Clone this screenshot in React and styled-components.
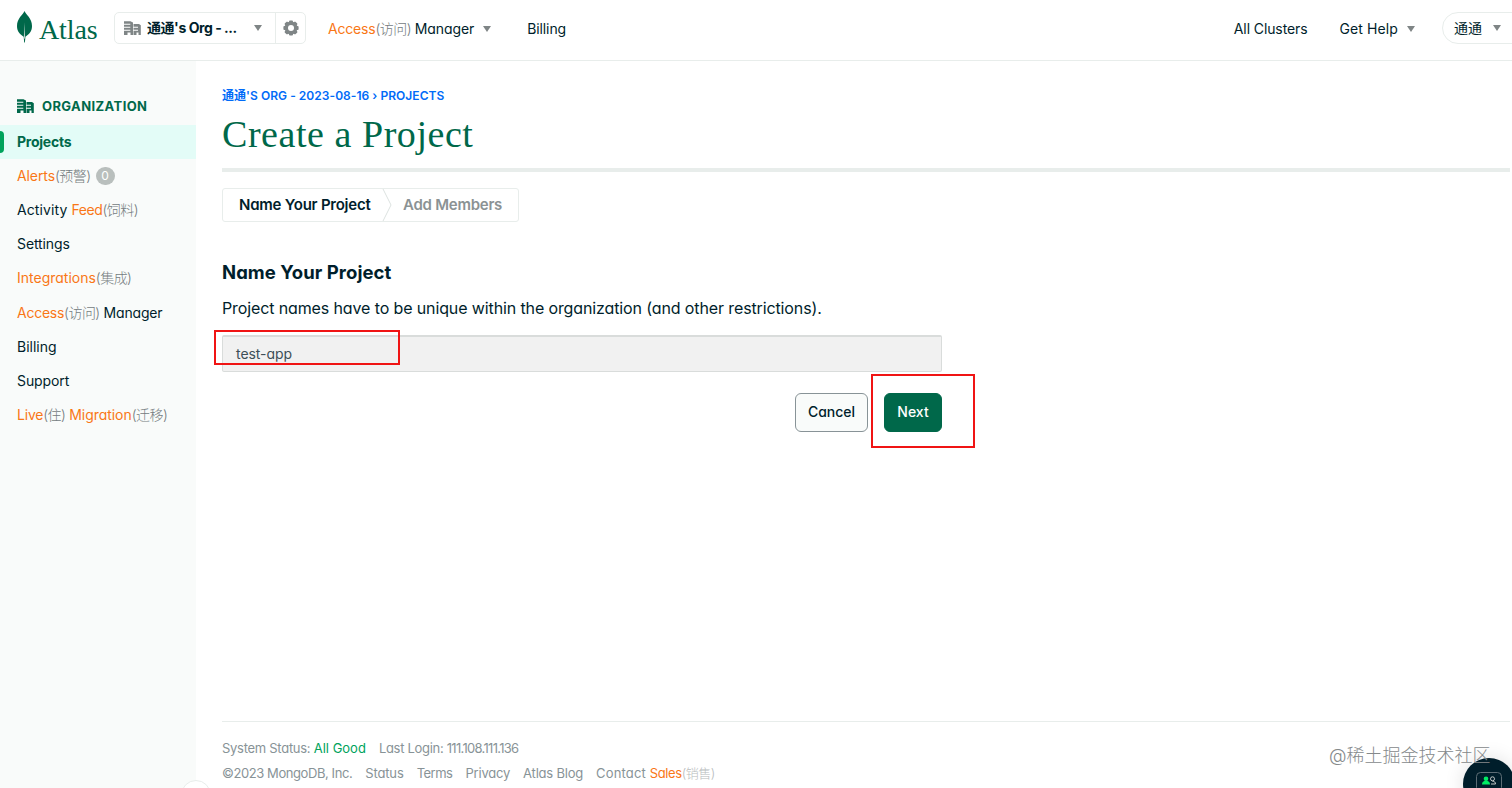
import React from 'react'
import styled, { createGlobalStyle } from 'styled-components'

const GlobalStyle = createGlobalStyle`
* {
box-sizing: border-box;
}
body {
margin: 0;
overflow: hidden;
background-color: #fff;
color: #001e2b;
font-family: Inter, "Noto Sans CJK SC", sans-serif;
font-feature-settings: "cv11";
font-size: 14px;
line-height: 20px;
}
`
const Page = styled.div`
height: 788px;
display: flex;
flex-direction: column;
overflow: hidden;
position: relative;
`
const Text = styled.span`
letter-spacing: ${(props) => props.$ls || 0}px;
white-space: pre;
`
const Word = styled(Text)`
color: #f97716;
`
const Hint = styled(Text)`
color: ${(props) => props.$light ? '#b8bcbd' : '#747b7e'};
font-weight: 300;
letter-spacing: -0.55px;
`

// header
const Header = styled.header`
height: 61px;
flex-shrink: 0;
display: flex;
align-items: flex-start;
padding: 12px 0 0 16px;
border-bottom: 1px solid #e8edeb;
`
const Logo = styled.div`
width: 98px;
height: 34px;
display: flex;
align-items: flex-start;
gap: 6px;
color: #00684a;
`
const LogoText = styled.span`
font-family: "Liberation Serif", serif;
font-size: 28px;
line-height: 36px;
letter-spacing: ${(props) => props.$ls}px;
`
const OrgPicker = styled.div`
width: 192px;
height: 32px;
display: flex;
border: 1px solid #e8edeb;
border-radius: 5px;
`
const OrgName = styled.div`
width: 161px;
display: flex;
align-items: center;
padding-left: 9px;
border-right: 1px solid #e8edeb;
font-weight: 700;
`
const OrgLabel = styled.span`
width: 113px;
padding-left: 6px;
`
const Gear = styled.div`
flex: 1;
display: flex;
align-items: center;
justify-content: center;
`
const NavItem = styled.div`
height: 33px;
display: flex;
align-items: center;
margin-left: ${(props) => props.$left}px;
`
const Spacer = styled.div`
flex: 1;
`
const Caret = styled.i`
border: 4.5px solid transparent;
border-top: 6px solid #7f8586;
border-bottom: 0;
margin-left: ${(props) => props.$left || 0}px;
`
const UserPill = styled.div`
width: 90px;
height: 32px;
margin-left: 27px;
margin-right: -20px;
padding-left: 11px;
display: flex;
align-items: center;
border: 1px solid #e8edeb;
border-radius: 16px;
`

// sidebar
const Body = styled.div`
flex: 1;
display: flex;
min-height: 0;
`
const Sidebar = styled.nav`
width: 196px;
flex-shrink: 0;
padding-top: 26px;
background-color: #f9fbfa;
position: relative;
`
const SideTitle = styled.div`
height: 38px;
display: flex;
align-items: center;
gap: 8px;
padding-left: 17px;
font-size: 13px;
font-weight: 700;
color: #00684a;
`
const SideItem = styled.div`
height: 34.2px;
display: flex;
align-items: center;
padding: 0 0 1px 17px;
position: relative;
color: ${(props) => props.$active ? '#00684a' : '#001e2b'};
font-weight: ${(props) => props.$active ? 700 : 400};
background-color: ${(props) => props.$active ? '#e3fcf7' : 'transparent'};
&::before {
content: '';
display: ${(props) => props.$active ? 'block' : 'none'};
position: absolute;
left: 0;
top: 6px;
width: 4px;
height: 22px;
border-radius: 0 6px 6px 0;
background-color: #00a35c;
}
`
const Badge = styled.span`
width: 19px;
height: 18px;
margin-left: 5px;
border-radius: 9px;
background-color: #b9bfbd;
color: #fff;
font-size: 12px;
line-height: 18px;
text-align: center;
`
const Collapse = styled.div`
position: absolute;
left: 181px;
top: 719px;
width: 30px;
height: 30px;
border-radius: 50%;
border: 1px solid #e8edeb;
background-color: #fff;
`

// main
const Main = styled.main`
flex: 1;
display: flex;
flex-direction: column;
padding: 26px 2px 0 26px;
`
const Crumb = styled.div`
height: 18px;
line-height: 18px;
font-size: 12px;
font-weight: 600;
color: #016bf8;
`
const Title = styled.h1`
height: 63px;
margin: 0;
padding-top: 7px;
font-family: "Liberation Serif", serif;
font-size: 38px;
font-weight: 400;
line-height: 44px;
color: #00684a;
`
const Rule = styled.div`
height: 4px;
flex-shrink: 0;
background-color: #e8edeb;
`
const Steps = styled.div`
width: 297px;
height: 34px;
margin-top: 16px;
display: flex;
align-items: center;
border: 1px solid #e8edeb;
border-radius: 3px;
font-size: 15px;
font-weight: 600;
`
const Step = styled.div`
width: ${(props) => props.$width}px;
padding-left: ${(props) => props.$pad}px;
color: ${(props) => props.$muted ? '#8b9294' : '#001e2b'};
`
const Heading = styled.h2`
margin: 37px 0 0;
height: 27px;
line-height: 26px;
font-size: 18.5px;
font-weight: 700;
`
const Lead = styled.p`
margin: 10px 0 0;
height: 24px;
line-height: 24px;
font-size: 16px;
`
const Form = styled.div`
width: 720px;
margin-top: 15px;
position: relative;
`
const Field = styled.div`
height: 37px;
padding: 0 0 0 13px;
border: 1px solid #d9dcdb;
border-top-width: 2px;
border-radius: 2px;
background-color: #f1f1f1;
color: #3d4f58;
line-height: 33px;
`
const Actions = styled.div`
display: flex;
justify-content: flex-end;
gap: 16px;
margin-top: 21px;
`
const Button = styled.button`
width: ${(props) => props.$primary ? 58 : 73}px;
height: 39px;
padding: 0 0 1px;
border: 1px solid ${(props) => props.$primary ? '#00684a' : '#889397'};
border-radius: 6px;
background-color: ${(props) => props.$primary ? '#00684a' : '#f9fbfa'};
color: ${(props) => props.$primary ? '#fff' : '#001e2b'};
font: inherit;
font-feature-settings: inherit;
font-weight: 500;
`
const Mark = styled.div`
position: absolute;
left: ${(props) => props.$x}px;
top: ${(props) => props.$y}px;
width: ${(props) => props.$w}px;
height: ${(props) => props.$h}px;
border: 2px solid #f01414;
`
const Footer = styled.footer`
margin-top: auto;
height: 67px;
padding-top: 13px;
border-top: 1px solid #e8edeb;
font-size: 13px;
color: #889397;
`
const FootRow = styled.div`
height: 25.5px;
display: flex;
align-items: center;
gap: 13px;
`
const Good = styled.span`
color: #00a35c;
letter-spacing: 0;
`
const Watermark = styled.div`
position: absolute;
left: 1329px;
top: 743px;
font-size: 18px;
line-height: 26px;
font-weight: 300;
color: #85898b;
white-space: nowrap;
`
const Chat = styled.div`
position: absolute;
left: 1463px;
top: 758px;
width: 52px;
height: 52px;
border-radius: 50%;
background-color: #001e2b;
box-shadow: 0 0 20px rgba(0, 0, 0, 0.12);
`
const ChatIcon = styled.svg`
position: absolute;
left: 13px;
top: 14px;
`

const Leaf = () => (
    <svg width="17" height="32" viewBox="0 0 17 32" overflow="visible">
        <path d="M8.500 -1C6.800 2.800 1 6.500 1 14c0 5.400 3 8.400 6.700 10.800l.5 5.700h.7l.5-5.700C13 22.400 16 19.400 16 14 16 6.500 10.200 2.800 8.500-1z" fill="#00684a" />
        <path d="M8.400 10.500l-.5 14.500.4 2h.4l.4-2z" fill="#b5d1c7" />
    </svg>
)

// two office blocks, the lower one on the right
const Buildings = ({ color, gap }) => (
    <svg width="17" height="16" viewBox="0 0 17 16">
        <path d="M0 1.200h6.500L9 2.500V15H6.500v-2.500h-3V15H0zM9.500 4H15l1.800 1.300V15h-2.300v-2.500h-2V15h-3z" fill={color} />
        <path d="M0 4.300h6.300M0 7.300h6.300M0 10.300h6.300M9 7.300h5M9 10.300h5" stroke={gap} strokeWidth="1.100" />
    </svg>
)

const GearIcon = () => (
    <svg width="16" height="16" viewBox="0 0 16 16">
        <g fill="#7f8586">
            {[0, 45, 90, 135].map((a) => (
                <rect key={a} x="6" y="0.400" width="4" height="15.200" rx="1" transform={`rotate(${a} 8 8)`} />
            ))}
            <circle cx="8" cy="8" r="6.500" />
        </g>
        <circle cx="8" cy="8" r="3" fill="#fff" />
    </svg>
)

const App = () => {
    return (
        <>
            <GlobalStyle />
            <Page>
                <Header>
                    <Logo>
                        <Leaf />
                        <LogoText $ls={-0.1}>Atlas</LogoText>
                    </Logo>
                    <OrgPicker>
                        <OrgName>
                            <Buildings color="#7f8586" gap="#fff" />
                            <OrgLabel><Text $ls={-0.45}>通通's Org - ...</Text></OrgLabel>
                            <Caret />
                        </OrgName>
                        <Gear><GearIcon /></Gear>
                    </OrgPicker>
                    <NavItem $left={22}>
                        <Word $ls={-0.2}>Access</Word><Hint>(访问)</Hint><Text $ls={-0.1}> Manager</Text>
                        <Caret $left={9} />
                    </NavItem>
                    <NavItem $left={36}><Text $ls={-0.1}>Billing</Text></NavItem>
                    <Spacer />
                    <NavItem><Text $ls={-0.1}>All Clusters</Text></NavItem>
                    <NavItem $left={32}><Text $ls={0.1}>Get Help</Text><Caret $left={9} /></NavItem>
                    <UserPill><Text>通通</Text><Caret $left={11} /></UserPill>
                </Header>
                <Body>
                    <Sidebar>
                        <SideTitle><Buildings color="#00684a" gap="#f9fbfa" /><Text $ls={0.4}>ORGANIZATION</Text></SideTitle>
                        <SideItem $active><Text $ls={-0.25}>Projects</Text></SideItem>
                        <SideItem><Word $ls={-0.1}>Alerts</Word><Hint>(预警)</Hint><Badge>0</Badge></SideItem>
                        <SideItem><Text $ls={0.1}>Activity </Text><Word $ls={-0.4}>Feed</Word><Hint>(饲料)</Hint></SideItem>
                        <SideItem><Text $ls={-0.1}>Settings</Text></SideItem>
                        <SideItem><Word>Integrations</Word><Hint>(集成)</Hint></SideItem>
                        <SideItem><Word $ls={-0.25}>Access</Word><Hint>(访问)</Hint><Text $ls={-0.15}> Manager</Text></SideItem>
                        <SideItem><Text>Billing</Text></SideItem>
                        <SideItem><Text $ls={-0.1}>Support</Text></SideItem>
                        <SideItem><Word $ls={-0.2}>Live</Word><Hint>(住)</Hint><Word $ls={-0.05}> Migration</Word><Hint>(迁移)</Hint></SideItem>
                        <Collapse />
                    </Sidebar>
                    <Main>
                        <Crumb><Text $ls={0.04}>通通'S ORG - 2023-08-16 › PROJECTS</Text></Crumb>
                        <Title><Text $ls={0.55}>Create a Project</Text></Title>
                        <Rule />
                        <Steps>
                            <Step $width={159} $pad={16}><Text $ls={-0.23}>Name Your Project</Text></Step>
                            <svg width="10" height="32" viewBox="0 0 10 32">
                                <path d="M1 0L9 16L1 32" fill="none" stroke="#dce2e0" />
                            </svg>
                            <Step $width={126} $pad={11} $muted><Text $ls={-0.25}>Add Members</Text></Step>
                        </Steps>
                        <Heading><Text $ls={0.05}>Name Your Project</Text></Heading>
                        <Lead><Text $ls={-0.12}>Project names have to be unique within the organization (and other restrictions).</Text></Lead>
                        <Form>
                            <Field><Text $ls={-0.05}>test-app</Text></Field>
                            <Actions>
                                <Button><Text>Cancel</Text></Button>
                                <Button $primary><Text>Next</Text></Button>
                            </Actions>
                            <Mark $x={-8} $y={-5} $w={186} $h={35} />
                            <Mark $x={649} $y={39} $w={104} $h={74} />
                        </Form>
                        <Footer>
                            <FootRow>
                                <Text $ls={-0.28}>System Status: <Good>All Good</Good></Text>
                                <Text $ls={-0.3}>Last Login: <Text $ls={-0.7}>111.108.111.136</Text></Text>
                            </FootRow>
                            <FootRow>
                                <Text $ls={-0.42}>©2023 MongoDB, Inc.</Text>
                                <Text $ls={-0.15}>Status</Text>
                                <Text $ls={-0.5}>Terms</Text>
                                <Text $ls={-0.2}>Privacy</Text>
                                <Text $ls={-0.2}>Atlas Blog</Text>
                                <Text $ls={0.15}>Contact <Word $ls={-0.35}>Sales</Word><Hint $light>(销售)</Hint></Text>
                            </FootRow>
                        </Footer>
                    </Main>
                </Body>
                <Chat>
                    <ChatIcon width="26" height="20" viewBox="0 0 26 20">
                        <rect x="0.500" y="0.500" width="25" height="19" rx="4" fill="none" stroke="#5c6c75" />
                        <circle cx="10" cy="6.800" r="2.300" fill="#00ed64" />
                        <path d="M6 12.500c0-2.500 1.500-3.700 4-3.700s4 1.200 4 3.700z" fill="#00ed64" />
                        <circle cx="16.500" cy="6.800" r="2" fill="none" stroke="#c1c7c6" />
                        <path d="M15 12h4.500c0-1.800-1-2.700-3-2.700" fill="none" stroke="#c1c7c6" />
                    </ChatIcon>
                </Chat>
                <Watermark>@稀土掘金技术社区</Watermark>
            </Page>
        </>
    )
}

export default App
